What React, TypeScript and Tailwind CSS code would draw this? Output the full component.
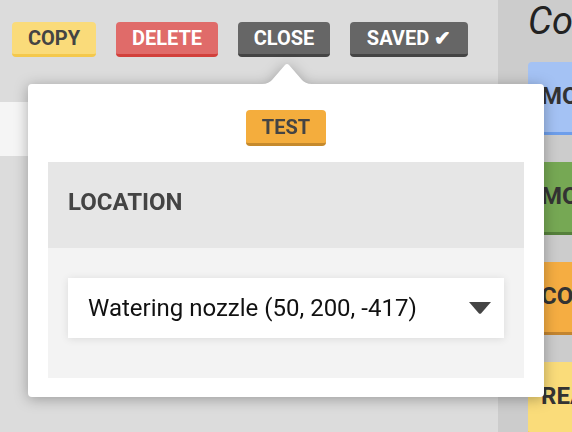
const buttons = [
  { label: "COPY", w: "w-[84px]", cls: "bg-[#fadb7a] border-[#f4c84c] text-[#444]" },
  { label: "DELETE", w: "w-[102px]", cls: "bg-[#e06b69] border-[#d2403b] text-white" },
  { label: "CLOSE", w: "w-[92px]", cls: "bg-[#666666] border-[#444444] text-white" },
  { label: "SAVED ✔", w: "w-[118px]", cls: "bg-[#666666] border-[#444444] text-white" },
];

const commands = [
  { label: "MOVE TO", cls: "bg-[#a4c2f4] border-[#6d9eeb]" },
  { label: "MOVE RELATIVE", cls: "bg-[#76a854] border-[#55803b]" },
  { label: "CONTROL PERIPHERAL", cls: "bg-[#f5ad42] border-[#c38530]" },
  { label: "READ SENSOR", cls: "bg-[#fadc7a] border-[#f4c84c]" },
];

export default function App() {
  return (
    <div className="relative flex w-[572px] h-[432px] overflow-hidden font-['Roboto',sans-serif]">
      {/* Editor area */}
      <div className="flex flex-col w-[498px] bg-[#dcdcdc]">
        <div className="flex gap-5 pl-3 pt-[22px]">
          {buttons.map((b) => (
            <button
              key={b.label}
              className={`${b.w} ${b.cls} h-[35px] rounded-[4px] border-b-[3px] flex items-center justify-center text-[20px] leading-6 font-bold`}
            >
              {b.label}
            </button>
          ))}
        </div>
        <div className="mt-[45px] h-[54px] bg-[#f5f5f5]" />
      </div>

      {/* Commands sidebar */}
      <div className="flex-1 bg-[#cccccc] pl-[30px] overflow-hidden">
        <h2 className="pt-[2px] text-[38px] leading-[38px] italic text-[#222] whitespace-nowrap">Commands</h2>
        <div className="mt-[22px] flex flex-col gap-[27px]">
          {commands.map((c) => (
            <div
              key={c.label}
              className={`${c.cls} h-[73px] rounded-l-[4px] border-b-[3px] pl-[13px] pt-5 text-[24px] leading-7 font-bold text-[#333] whitespace-nowrap`}
            >
              {c.label}
            </div>
          ))}
        </div>
      </div>

      {/* Popover */}
      <div className="absolute left-[28px] top-[62px] w-[516px] drop-shadow-[0_2px_7px_rgba(0,0,0,0.3)]">
        <svg width="50" height="22" viewBox="0 0 50 22" className="ml-[234px] block">
          <path d="M0 22 C5 22 8 20 10 18 L23 3 Q25 1 27 3 L40 18 C42 20 45 22 50 22 Z" fill="#fff" />
        </svg>
        <div className="bg-white rounded-[4px] px-5 pt-[26px] pb-[19px]">
          <div className="flex justify-center mb-4">
            <div className="w-[80px] h-[36px] rounded-[4px] bg-[#f4ad3d] border-b-[3px] border-[#c68a2c] flex items-center justify-center text-[20px] leading-6 font-bold text-[#444]">
              TEST
            </div>
          </div>
          <div className="h-[86px] bg-[#e6e6e6] px-5 pt-[26px] text-[24px] leading-7 font-bold text-[#444]">
            LOCATION
          </div>
          <div className="bg-[#f3f3f3] px-5 pt-[30px] pb-[40px]">
            <div className="h-[60px] bg-white flex items-center justify-between pl-5 pr-[13px] shadow-[0_1px_8px_rgba(0,0,0,0.1)]">
              <span className="text-[24px] leading-7 text-[#111]">Watering nozzle (50, 200, -417)</span>
              <svg width="22" height="12" viewBox="0 0 22 12">
                <path d="M0 0 H22 L12 11.5 Q11 12 10 11.5 Z" fill="#444" />
              </svg>
            </div>
          </div>
        </div>
      </div>
    </div>
  );
}
